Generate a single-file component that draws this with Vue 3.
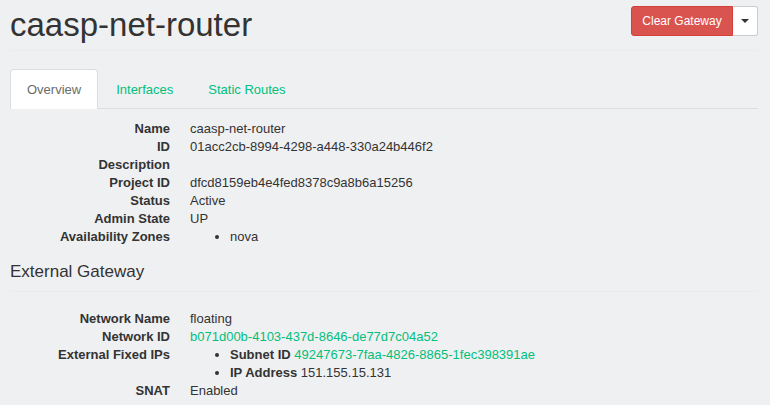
<script setup>
const tabs = ['Overview', 'Interfaces', 'Static Routes']
const details = [
  ['Name', 'caasp-net-router'],
  ['ID', '01acc2cb-8994-4298-a448-330a24b446f2'],
  ['Description', ''],
  ['Project ID', 'dfcd8159eb4e4fed8378c9a8b6a15256'],
  ['Status', 'Active'],
  ['Admin State', 'UP'],
]
</script>

<template>
  <main class="page">
    <header class="page-header">
      <h1>caasp-net-router</h1>
      <div class="btn-group">
        <button type="button" class="btn btn-danger">Clear Gateway</button>
        <button type="button" class="btn btn-toggle" aria-label="More actions"><span class="caret"></span></button>
      </div>
    </header>
    <nav class="tabs">
      <a v-for="(tab, i) in tabs" :key="tab" href="#" class="tab" :class="{ active: i === 0 }">{{ tab }}</a>
    </nav>
    <dl class="details">
      <template v-for="[label, value] in details" :key="label">
        <dt>{{ label }}</dt>
        <dd>{{ value }}</dd>
      </template>
      <dt>Availability Zones</dt>
      <dd>
        <ul>
          <li>nova</li>
        </ul>
      </dd>
    </dl>
    <h4>External Gateway</h4>
    <hr />
    <dl class="details">
      <dt>Network Name</dt>
      <dd>floating</dd>
      <dt>Network ID</dt>
      <dd><a href="#">b071d00b-4103-437d-8646-de77d7c04a52</a></dd>
      <dt>External Fixed IPs</dt>
      <dd>
        <ul>
          <li><b>Subnet ID</b> <a href="#">49247673-7faa-4826-8865-1fec398391ae</a></li>
          <li><b>IP Address</b> 151.155.15.131</li>
        </ul>
      </dd>
      <dt>SNAT</dt>
      <dd>Enabled</dd>
    </dl>
  </main>
</template>

<style>
body {
  background: #eff0f2;
}
</style>

<style scoped>
.page {
  padding: 6px 12px 0 10px;
  font-family: "Liberation Sans", Arial, sans-serif;
  font-size: 13px;
  line-height: 18px;
  color: #333;
}
.page-header {
  display: flex;
  justify-content: space-between;
  align-items: flex-start;
  padding-bottom: 6px;
  margin-bottom: 18px;
  border-bottom: 1px solid #ebebec;
}
h1 {
  margin: 0;
  font-size: 33px;
  font-weight: 400;
  line-height: 38px;
}
.btn-group {
  display: flex;
}
.btn {
  box-sizing: border-box;
  height: 30px;
  padding: 0 10px;
  border: 1px solid #ccc;
  font-family: inherit;
  font-size: 12px;
  line-height: 18px;
}
.btn-danger {
  min-width: 102px;
  border-color: #d43f3a;
  border-radius: 3px 0 0 3px;
  background: #d9534f;
  color: #fff;
}
.btn-toggle {
  padding: 0 8px;
  border-left: 0;
  border-radius: 0 3px 3px 0;
  background: #fff;
}
.caret {
  display: block;
  border: 4px solid transparent;
  border-top-color: #333;
  border-bottom: 0;
}
.tabs {
  display: flex;
  gap: 1px;
  margin-bottom: 11px;
  border-bottom: 1px solid #ddd;
}
a {
  color: #02bf7c;
  text-decoration: none;
}
.tab {
  padding: 11px 16px 9px;
  border: 1px solid transparent;
  border-bottom: 0;
  border-radius: 4px 4px 0 0;
}
.tab.active {
  margin-bottom: -1px;
  padding-bottom: 10px;
  border-color: #ddd;
  background: #fff;
  color: #6b6b6b;
}
.details {
  display: grid;
  grid-template-columns: 160px 1fr;
  column-gap: 20px;
  margin: 0;
}
dt {
  min-height: 18px;
  font-weight: 700;
  text-align: right;
}
dd {
  margin: 0;
}
ul {
  margin: 0;
  padding-left: 40px;
}
h4 {
  margin: 16px 0 9px;
  font-size: 17px;
  font-weight: 400;
  line-height: 20px;
}
hr {
  margin: 0 0 18px;
  border: 0;
  border-top: 1px solid #ebebec;
}
</style>
